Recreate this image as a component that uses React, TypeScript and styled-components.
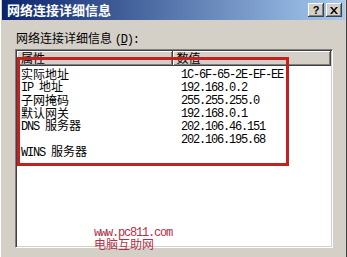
import React from "react";
import styled, { createGlobalStyle } from "styled-components";

const GlobalStyle = createGlobalStyle`
	html, body {
		margin: 0;
		padding: 0;
		background: #d4d0c8;
	}
`;

const rows: [string, string][] = [
	["实际地址", "1C-6F-65-2E-EF-EE"],
	["IP 地址", "192.168.0.2"],
	["子网掩码", "255.255.255.0"],
	["默认网关", "192.168.0.1"],
	["DNS 服务器", "202.106.46.151"],
	["", "202.106.195.68"],
	["WINS 服务器", ""],
];

// SimSun draws latin at half width, so ascii runs get their own span
const mixed = (text: string) =>
	text
		.split(/([\x00-\x7F]+)/)
		.filter((s) => s !== "")
		.map((part, i) =>
			/^[\x00-\x7F]+$/.test(part) ? <Half key={i}>{part}</Half> : part
		);

const App: React.FC = () => {
	return (
		<>
			<GlobalStyle />
			<Window>
				<TitleBar>
					<Title>网络连接详细信息</Title>
					<CaptionButtons>
						<CaptionButton>?</CaptionButton>
						<CaptionButton>
							<svg width="8" height="7" viewBox="0 0 8 7">
								<path
									d="M0 0h2l2 2.5L6 0h2L5 3.5 8 7H6L4 4.5 2 7H0l3-3.5z"
									fill="#000"
								/>
							</svg>
						</CaptionButton>
					</CaptionButtons>
				</TitleBar>
				<Body>
					<Label>
						网络连接详细信息 <Half>(<u>D</u>):</Half>
					</Label>
					<ListBox>
						<Header>
							<HeaderCell $width={156}>属性</HeaderCell>
							<HeaderCell $width={159}>数值</HeaderCell>
						</Header>
						<Rows>
							{rows.map(([name, value], i) => (
								<Row key={i}>
									<Cell $width={156}>{mixed(name)}</Cell>
									<Cell $width={150}>{mixed(value)}</Cell>
								</Row>
							))}
						</Rows>
						<Highlight />
						<Watermark>
							<WatermarkUrl>www.pc811.com</WatermarkUrl>
							<WatermarkName>电脑互助网</WatermarkName>
						</Watermark>
					</ListBox>
				</Body>
			</Window>
		</>
	);
};

export default App;

const Window = styled.div`
	width: 347px;
	height: 257px;
	box-sizing: border-box;
	padding: 0 2px;
	background: #d4d0c8;
	box-shadow: inset 1px 0 #ffffff, inset -1px 0 #404040;
	display: flex;
	flex-direction: column;
	font-family: "Noto Sans CJK SC", sans-serif;
	overflow: hidden;
`;

const TitleBar = styled.div`
	height: 20px;
	flex-shrink: 0;
	display: flex;
	align-items: center;
	justify-content: space-between;
	padding: 0 3px 0 5px;
	background: linear-gradient(to right, #0a246a, #a6caf0);
`;

const Title = styled.span`
	color: #ffffff;
	font-size: 13px;
	font-weight: bold;
	line-height: 14px;
`;

const CaptionButtons = styled.div`
	display: flex;
	gap: 2px;
`;

const CaptionButton = styled.div`
	width: 16px;
	height: 14px;
	box-sizing: border-box;
	background: #d4d0c8;
	box-shadow: inset -1px -1px #404040, inset 1px 1px #ffffff,
		inset -2px -2px #808080;
	display: flex;
	align-items: center;
	justify-content: center;
	font-family: "Liberation Sans", sans-serif;
	font-size: 11px;
	font-weight: bold;
	color: #000000;
	line-height: 1;
`;

const Body = styled.div`
	flex: 1;
	display: flex;
	flex-direction: column;
	padding: 11px 12px 9px 13px;
`;

const Label = styled.div`
	font-size: 12px;
	line-height: 13px;
	color: #000000;
	padding-left: 1px;
	height: 18px;
`;

const Half = styled.span`
	font-family: "Liberation Mono", monospace;
	font-size: 12px;
	letter-spacing: -1.2px;
`;

const ListBox = styled.div`
	position: relative;
	flex: 1;
	background: #ffffff;
	box-sizing: border-box;
	border-top: 1px solid #808080;
	border-left: 1px solid #808080;
	border-right: 1px solid #ffffff;
	border-bottom: 1px solid #ffffff;
	box-shadow: inset 1px 1px #404040, inset -1px -1px #d4d0c8;
	padding: 1px;
	display: flex;
	flex-direction: column;
`;

const Header = styled.div`
	display: flex;
	height: 15px;
	flex-shrink: 0;
`;

const HeaderCell = styled.div<{ $width: number }>`
	width: ${(p) => p.$width}px;
	box-sizing: border-box;
	background: #d4d0c8;
	box-shadow: inset -1px -1px #404040, inset 1px 1px #ffffff,
		inset -2px -2px #808080;
	font-size: 12px;
	line-height: 14px;
	padding-left: 4px;
	color: #000000;
`;

const Rows = styled.div`
	display: flex;
	flex-direction: column;
	padding-top: 1px;
`;

const Row = styled.div`
	display: flex;
	height: 13px;
	align-items: center;
`;

const Cell = styled.div<{ $width: number }>`
	width: ${(p) => p.$width}px;
	padding-left: 4px;
	font-size: 12px;
	line-height: 13px;
	color: #000000;
	white-space: nowrap;
`;

const Highlight = styled.div`
	position: absolute;
	left: 1px;
	top: 7px;
	width: 272px;
	height: 109px;
	box-sizing: border-box;
	border: 3px solid #c4201f;
	pointer-events: none;
`;

const Watermark = styled.div`
	position: absolute;
	left: 78px;
	top: 178px;
	display: flex;
	flex-direction: column;
	color: #b0304a;
`;

const WatermarkUrl = styled.span`
	font-family: "Liberation Mono", monospace;
	font-size: 12px;
	letter-spacing: -1.2px;
	line-height: 10px;
`;

const WatermarkName = styled.span`
	font-size: 12px;
	line-height: 11px;
`;
